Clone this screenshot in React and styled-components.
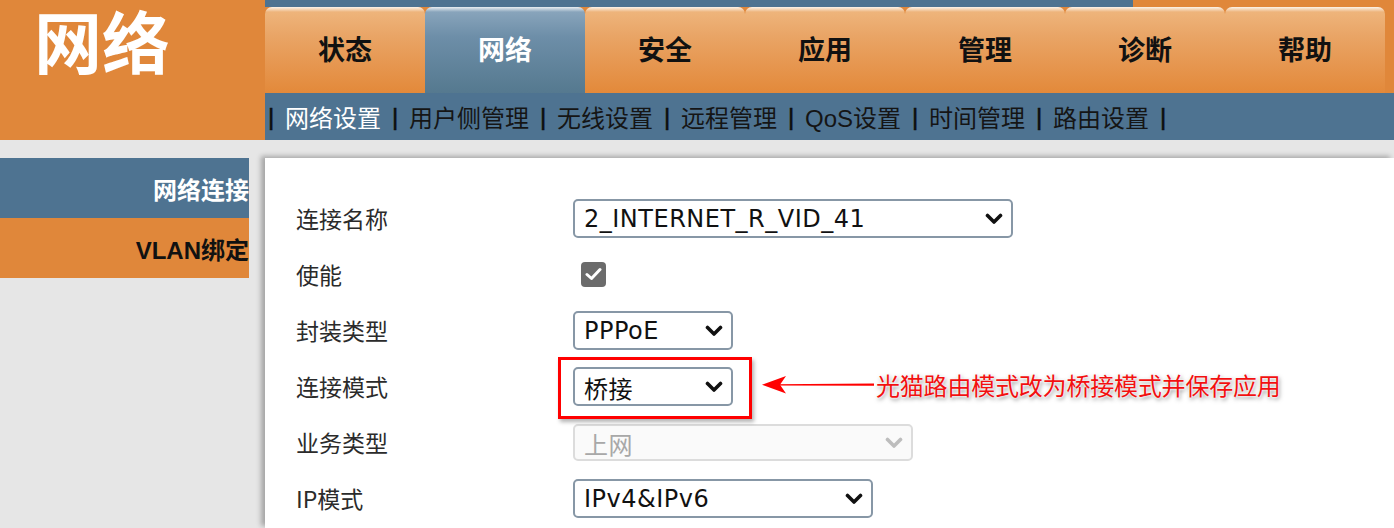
import React from 'react';
import styled, { createGlobalStyle } from 'styled-components';

const GlobalStyle = createGlobalStyle`
  html, body {
    margin: 0;
    padding: 0;
    background: #e6e6e6;
  }
  body {
    font-family: 'Noto Sans', 'Noto Sans CJK SC', sans-serif;
  }
`;

const orange = '#e0873a';
const blue = '#4e7391';

const Page = styled.div`
  width: 1394px;
  height: 528px;
  overflow: hidden;
  background: #e6e6e6;
  display: flex;
  flex-direction: column;
`;

const Header = styled.header`
  display: grid;
  grid-template-columns: 265px 1fr;
  height: 140px;
`;

const Brand = styled.div`
  background: ${orange};
  color: #fff;
  font-family: 'Noto Sans CJK SC', sans-serif;
  font-weight: 700;
  font-size: 68px;
  line-height: 80px;
  padding-left: 34px;
`;

const NavArea = styled.div`
  display: flex;
  flex-direction: column;
  background: ${orange};
`;

const TopStrip = styled.div`
  height: 7px;
  width: 868px;
  background: ${blue};
`;

const TabBar = styled.nav`
  display: flex;
  height: 86px;
  padding-right: 9px;
`;

const Tab = styled.div`
  width: 160px;
  display: flex;
  align-items: center;
  justify-content: center;
  padding-bottom: 4px;
  box-sizing: border-box;
  border-radius: 7px 7px 0 0;
  font-family: 'Noto Sans CJK SC', sans-serif;
  font-weight: 700;
  font-size: 27px;
  color: ${(p) => (p.$active ? '#fff' : '#111')};
  background: ${(p) =>
    p.$active
      ? 'linear-gradient(to bottom, #e9eef2 0px, #88a4bb 5px, #6d8ea8 30px, #55798f 86px)'
      : 'linear-gradient(to bottom, #fbf3ea 0px, #eeb47b 5px, #e9a465 30px, #e3893a 86px)'};
`;

const SubNav = styled.div`
  height: 47px;
  background: ${blue};
  display: flex;
  align-items: center;
  font-family: 'Liberation Sans', 'Noto Sans CJK SC', sans-serif;
  font-size: 24px;
  color: #151515;
`;

const SubItem = styled.span`
  color: ${(p) => (p.$active ? '#fff' : '#151515')};
`;

const Sep = styled.span`
  display: inline-block;
  box-sizing: border-box;
  width: ${(p) => (p.$first ? 20 : 28)}px;
  padding-left: ${(p) => (p.$first ? 3 : 0)}px;
  text-align: ${(p) => (p.$first ? 'left' : 'center')};
  color: #0d0d0d;
  -webkit-text-stroke: 0.6px #0d0d0d;
`;

const Body = styled.div`
  flex: 1;
  display: grid;
  grid-template-columns: 265px 1fr;
  padding-top: 18px;
`;

const Sidebar = styled.aside`
  display: flex;
  flex-direction: column;
  width: 249px;
`;

const SideItem = styled.div`
  height: 60px;
  display: flex;
  align-items: center;
  justify-content: flex-end;
  font-family: 'Liberation Sans', 'Noto Sans CJK SC', sans-serif;
  font-weight: 700;
  font-size: 24px;
  background: ${(p) => (p.$active ? blue : orange)};
  color: ${(p) => (p.$active ? '#fff' : '#111')};
`;

const Content = styled.main`
  background: #fff;
  box-shadow: -4px -2px 5px rgba(0, 0, 0, 0.28);
  padding: 32px 0 0 31px;
  display: flex;
  flex-direction: column;
`;

const Row = styled.div`
  display: grid;
  grid-template-columns: 277px auto;
  align-items: center;
  height: 56px;
`;

const Label = styled.span`
  font-family: 'Noto Sans CJK SC', sans-serif;
  font-size: 23px;
  color: #2b2b2b;
`;

const Select = styled.div`
  box-sizing: border-box;
  width: ${(p) => p.$w}px;
  height: ${(p) => (p.$disabled ? 37 : 39)}px;
  border: 2px solid ${(p) => (p.$disabled ? '#dcdcdc' : '#8797a6')};
  border-radius: 5px;
  background: ${(p) => (p.$disabled ? '#fafafa' : '#fff')};
  display: flex;
  align-items: center;
  justify-content: space-between;
  padding: 2px 8px 0 9px;
  font-family: 'DejaVu Sans', 'Noto Sans CJK SC', sans-serif;
  font-size: 24px;
  letter-spacing: 0.5px;
  color: ${(p) => (p.$disabled ? '#a8a8a8' : '#111')};
`;

const Chevron = ({ disabled }) => (
  <svg width="18" height="12" viewBox="0 0 18 12">
    <path
      d="M2.5 2.5 L9 9 L15.5 2.5"
      fill="none"
      stroke={disabled ? '#bdbdbd' : '#111'}
      strokeWidth="3.6"
      strokeLinecap="round"
      strokeLinejoin="round"
    />
  </svg>
);

const Check = styled.div`
  width: 25px;
  height: 25px;
  margin-left: 8px;
  border-radius: 4px;
  background: #6b6b6b;
  display: flex;
  align-items: center;
  justify-content: center;
`;

const Annotated = styled.div`
  position: relative;
  width: fit-content;
`;

const RedBox = styled.div`
  position: absolute;
  top: -10px;
  bottom: -13px;
  left: -15px;
  right: -19px;
  border: 3px solid #f00;
  box-shadow: 2px 3px 4px rgba(0, 0, 0, 0.3);
  pointer-events: none;
`;

const Arrow = styled.svg`
  position: absolute;
  left: 189px;
  top: 3px;
`;

const Note = styled.div`
  position: absolute;
  left: 303px;
  top: 0;
  white-space: nowrap;
  font-family: 'Noto Sans CJK SC', sans-serif;
  font-size: 24px;
  letter-spacing: -0.2px;
  color: #f21010;
  text-shadow: 0 0 2px #fff, 0 0 3px #fff, 1px 2px 4px rgba(0, 0, 0, 0.5);
`;

const tabs = ['状态', '网络', '安全', '应用', '管理', '诊断', '帮助'];
const subs = ['网络设置', '用户侧管理', '无线设置', '远程管理', 'QoS设置', '时间管理', '路由设置'];

export default function App() {
  return (
    <Page>
      <GlobalStyle />
      <Header>
        <Brand>网络</Brand>
        <NavArea>
          <TopStrip />
          <TabBar>
            {tabs.map((t) => (
              <Tab key={t} $active={t === '网络'}>
                {t}
              </Tab>
            ))}
          </TabBar>
          <SubNav>
            <Sep $first>|</Sep>
            {subs.map((s, i) => (
              <React.Fragment key={s}>
                <SubItem $active={i === 0}>{s}</SubItem>
                <Sep>|</Sep>
              </React.Fragment>
            ))}
          </SubNav>
        </NavArea>
      </Header>
      <Body>
        <Sidebar>
          <SideItem $active>网络连接</SideItem>
          <SideItem>VLAN绑定</SideItem>
        </Sidebar>
        <Content>
          <Row>
            <Label>连接名称</Label>
            <Select $w={440}>
              2_INTERNET_R_VID_41
              <Chevron />
            </Select>
          </Row>
          <Row>
            <Label>使能</Label>
            <Check>
              <svg width="17" height="14" viewBox="0 0 17 14">
                <path d="M2 7.5 L6.5 11.5 L15 2.5" fill="none" stroke="#fff" strokeWidth="3" strokeLinecap="round" strokeLinejoin="round" />
              </svg>
            </Check>
          </Row>
          <Row>
            <Label>封装类型</Label>
            <Select $w={160}>
              PPPoE
              <Chevron />
            </Select>
          </Row>
          <Row>
            <Label>连接模式</Label>
            <Annotated>
              <Select $w={160}>
                桥接
                <Chevron />
              </Select>
              <RedBox />
              <Arrow width="112" height="30" viewBox="0 0 112 30">
                <path d="M12 14.2 L112 13.6 L112 15.8 L12 15.6 Z" fill="#f00" />
                <path d="M0 14.8 L24 6 L18 14.8 L24 23.5 Z" fill="#f00" />
              </Arrow>
              <Note>光猫路由模式改为桥接模式并保存应用</Note>
            </Annotated>
          </Row>
          <Row>
            <Label>业务类型</Label>
            <Select $w={340} $disabled>
              上网
              <Chevron disabled />
            </Select>
          </Row>
          <Row>
            <Label>IP模式</Label>
            <Select $w={300}>
              IPv4&amp;IPv6
              <Chevron />
            </Select>
          </Row>
        </Content>
      </Body>
    </Page>
  );
}
